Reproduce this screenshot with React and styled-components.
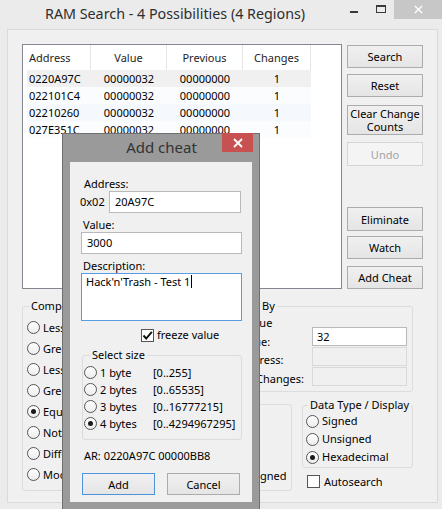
import React from 'react';
import styled, { createGlobalStyle } from 'styled-components';

const GlobalStyle = createGlobalStyle`
  *, *::before, *::after { box-sizing: border-box; }
  html, body { margin: 0; padding: 0; }
  body {
    width: 442px;
    height: 509px;
    overflow: hidden;
    background: #ebebeb;
    font-family: "Noto Sans", "Liberation Sans", sans-serif;
    font-size: 11px;
    line-height: 14px;
    color: #000;
  }
`;

const Window = styled.div`
  position: relative;
  width: 442px;
  height: 509px;
  display: flex;
  flex-direction: column;
  background: #ebebeb;
  overflow: hidden;
`;

const TitleBar = styled.div`
  height: 29px;
  flex: none;
  display: flex;
  align-items: flex-start;
`;

const Title = styled.div`
  flex: 1;
  padding-left: 45px;
  line-height: 27px;
  font-size: 14.3px;
  color: #2e2e2e;
  white-space: nowrap;
`;

const CaptionButton = styled.div`
  width: ${p => p.$w}px;
  height: 19px;
  display: flex;
  align-items: center;
  justify-content: center;
  background: ${p => p.$bg || 'transparent'};
`;

const MinGlyph = styled.span`
  width: 8px;
  height: 2px;
  margin-top: 5px;
  background: #3a3a3a;
`;

const MaxGlyph = styled.span`
  width: 10px;
  height: 8px;
  margin-top: -1px;
  border: 1px solid #3a3a3a;
  border-top-width: 2px;
`;

const Client = styled.div`
  flex: 1;
  margin: 0 4px 6px 7px;
  padding: 14px 13px 0 14px;
  background: #f0f0f0;
  border: 1px solid #dadada;
  display: flex;
  flex-direction: column;
`;

const TopRow = styled.div`
  display: flex;
  gap: 5px;
`;

const ResultList = styled.div`
  width: 320px;
  height: 245px;
  background: #fff;
  border: 1px solid #828790;
  overflow: hidden;
`;

const ListHeader = styled.div`
  display: grid;
  grid-template-columns: 68px 76px 76px 68px;
  width: 288px;
  height: 25px;
`;

const HeaderCell = styled.div`
  display: flex;
  align-items: center;
  justify-content: ${p => (p.$left ? 'flex-start' : 'center')};
  padding-left: ${p => (p.$left ? 6 : 0)}px;
  border-right: 1px solid #e5e5e5;
  color: #1e1e1e;
`;

const ListRow = styled.div`
  display: grid;
  grid-template-columns: 64px 76px 76px 68px;
  width: 284px;
  height: 17px;
  margin-left: 4px;
  align-items: center;
  background: ${p => p.$bg};
`;

const Cell = styled.div`
  text-align: ${p => (p.$left ? 'left' : 'center')};
  padding-left: ${p => (p.$left ? 2 : 0)}px;
  white-space: nowrap;
`;

const ButtonColumn = styled.div`
  width: 76px;
  padding-top: 1px;
  display: flex;
  flex-direction: column;
`;

const Button = styled.button`
  font: inherit;
  line-height: 13px;
  padding: 0;
  width: ${p => p.$w || 76}px;
  height: ${p => p.$h || 23}px;
  margin-top: ${p => p.$mt || 0}px;
  border: 1px solid ${p => (p.$default ? '#4d94dd' : p.disabled ? '#d5d5d5' : '#acacac')};
  border-radius: 0;
  background: ${p => (p.disabled ? '#f4f4f4' : 'linear-gradient(#f0f0f0, #e5e5e5)')};
  color: ${p => (p.disabled ? '#a3a3a3' : '#000')};
  display: flex;
  align-items: center;
  justify-content: center;
  text-align: center;
`;

const BottomRow = styled.div`
  margin-top: 10px;
  display: grid;
  grid-template-columns: 152px 233px;
  column-gap: 6px;
  align-items: start;
`;

const Group = styled.fieldset`
  margin: 0;
  min-width: 0;
  padding: ${p => p.$pad};
  height: ${p => (p.$h ? `${p.$h}px` : 'auto')};
  border: 1px solid #dcdcdc;
  border-radius: 3px;
`;

const Legend = styled.legend`
  padding: 0 2px;
  margin-left: ${p => p.$indent || 2}px;
  line-height: 14px;
  color: #000;
  white-space: nowrap;
`;

const OptionRow = styled.div`
  display: flex;
  align-items: center;
  gap: ${p => p.$gap || 3}px;
  height: ${p => p.$h}px;
  margin-top: ${p => p.$mt || 0}px;
  white-space: nowrap;
`;

const RadioMark = styled.span`
  flex: none;
  width: 13px;
  height: 13px;
  border-radius: 50%;
  border: 1px solid #555;
  background: linear-gradient(#ffffff, #ececec);
  display: inline-flex;
  align-items: center;
  justify-content: center;

  &::after {
    content: '';
    width: 5px;
    height: 5px;
    border-radius: 50%;
    background: #1a1a1a;
    display: ${p => (p.$on ? 'block' : 'none')};
  }
`;

const CheckMark = styled.span`
  flex: none;
  width: 13px;
  height: 13px;
  border: 1px solid #555;
  background: #fff;
  display: inline-flex;
  align-items: center;
  justify-content: center;
`;

const CompareBody = styled.div`
  display: flex;
`;

const CompareLabels = styled.div`
  width: 131px;
  display: flex;
  flex-direction: column;
`;

const CompareBoxes = styled.div`
  margin-top: 13px;
  display: flex;
  flex-direction: column;
  gap: 1px;
`;

const TextBox = styled.div`
  width: ${p => p.$w}px;
  height: ${p => p.$h || 19}px;
  padding: 0 0 0 ${p => p.$pl || 4}px;
  border: 1px solid ${p => (p.$disabled ? '#d9d9d9' : '#b9b9b9')};
  background: ${p => (p.$disabled ? '#f0f0f0' : '#fff')};
  display: flex;
  align-items: center;
  white-space: nowrap;
`;

const DataRow = styled.div`
  margin-top: 5px;
  display: grid;
  grid-template-columns: 112px 111px;
  column-gap: 10px;
  align-items: start;
`;

const Stack = styled.div`
  display: flex;
  flex-direction: column;
  padding-top: ${p => p.$pt || 0}px;
`;

const AutoRow = styled.div`
  margin-top: 7px;
  padding-left: 5px;
  display: flex;
  align-items: center;
  gap: 4px;
  height: 13px;
`;

/* overlay dialog */

const Dialog = styled.div`
  position: absolute;
  left: 62px;
  top: 133px;
  width: 198px;
  height: 377px;
  padding: 0 7px 7px;
  background: #9a9a9a;
  border: 1px solid #707070;
  display: flex;
  flex-direction: column;
`;

const DialogTitleBar = styled.div`
  height: 28px;
  flex: none;
  display: flex;
  align-items: flex-start;
`;

const DialogTitle = styled.div`
  flex: 1;
  padding-left: 31px;
  text-align: center;
  font-size: 15px;
  line-height: 27px;
  color: #333;
`;

const DialogClose = styled.div`
  width: 31px;
  height: 19px;
  margin: -1px -1px 0 0;
  background: #c75050;
  display: flex;
  align-items: center;
  justify-content: center;
`;

const DialogClient = styled.div`
  flex: 1;
  padding: 0 10px 0 11px;
  background: #f0f0f0;
  display: flex;
  flex-direction: column;
`;

const FieldLabel = styled.div`
  margin-top: ${p => p.$mt}px;
  margin-left: ${p => p.$ml || 2}px;
  line-height: 14px;
`;

const AddressRow = styled.div`
  display: flex;
  align-items: center;
  margin-left: -1px;
`;

const Prefix = styled.span`
  width: 29px;
`;

const Input = styled(TextBox)`
  height: 22px;
  padding-left: 5px;
`;

const Description = styled.div`
  width: 161px;
  height: 48px;
  padding: 1px 4px;
  border: 1px solid #569de5;
  background: #fff;
`;

const Caret = styled.span`
  display: inline-block;
  width: 1px;
  height: 13px;
  margin-left: 1px;
  vertical-align: -2px;
  background: #000;
`;

const FreezeRow = styled(OptionRow)`
  margin: 7px 0 0 60px;
`;

const SizeGroup = styled(Group)`
  margin: 6px 0 0 1px;
  width: 160px;
`;

const SizeName = styled.span`
  width: 50px;
`;

const DialogButtons = styled.div`
  margin: 10px 0 0 1px;
  display: flex;
  gap: 12px;
`;

const CloseIcon = ({ size = 9, width = 1.5 }) => (
  <svg width={size} height={size} viewBox="0 0 10 10">
    <path d="M1 1 L9 9 M9 1 L1 9" stroke="#fff" strokeWidth={width} fill="none" />
  </svg>
);

const Tick = () => (
  <svg width="11" height="11" viewBox="0 0 11 11">
    <path d="M1.5 5.5 L4.2 8.5 L9.8 1.8" stroke="#111" strokeWidth="1.9" fill="none" />
  </svg>
);

const Radio = ({ on, children, h, gap }) => (
  <OptionRow $h={h} $gap={gap}>
    <RadioMark $on={on} />
    <span>{children}</span>
  </OptionRow>
);

const rows = [
  ['0220A97C', '00000032', '00000000', '1'],
  ['022101C4', '00000032', '00000000', '1'],
  ['02210260', '00000032', '00000000', '1'],
  ['027E351C', '00000032', '00000000', '1'],
];
const rowColors = ['#f0f0f0', '#fbfcfe', '#f5f8fd', '#fbfcfe'];

const operators = [
  'Less Than',
  'Greater Than',
  'Less Than or Equal To',
  'Greater Than or Equal To',
  'Equal To',
  'Not Equal To',
  'Different By:',
  'Modulo',
];

const sizes = [
  ['1 byte', '[0..255]'],
  ['2 bytes', '[0..65535]'],
  ['3 bytes', '[0..16777215]'],
  ['4 bytes', '[0..4294967295]'],
];

const AddCheatDialog = () => (
  <Dialog>
    <DialogTitleBar>
      <DialogTitle>Add cheat</DialogTitle>
      <DialogClose>
        <CloseIcon size={10} width={1.8} />
      </DialogClose>
    </DialogTitleBar>
    <DialogClient>
      <FieldLabel $mt={15} $ml={3}>Address:</FieldLabel>
      <AddressRow>
        <Prefix>0x02</Prefix>
        <Input $w={132}>20A97C</Input>
      </AddressRow>
      <FieldLabel $mt={5}>Value:</FieldLabel>
      <Input $w={161}>3000</Input>
      <FieldLabel $mt={5}>Description:</FieldLabel>
      <Description>
        Hack'n'Trash - Test 1<Caret />
      </Description>
      <FreezeRow $h={14}>
        <CheckMark><Tick /></CheckMark>
        <span>freeze value</span>
      </FreezeRow>
      <SizeGroup $pad="2px 4px 7px 1px">
        <Legend $indent={6}>Select size</Legend>
        {sizes.map(([label, range], i) => (
          <OptionRow key={label} $h={17}>
            <RadioMark $on={i === 3} />
            <SizeName>{label}</SizeName>
            <span>{range}</span>
          </OptionRow>
        ))}
      </SizeGroup>
      <FieldLabel $mt={9} $ml={3}>AR: 0220A97C 00000BB8</FieldLabel>
      <DialogButtons>
        <Button $w={73} $h={22} $default>Add</Button>
        <Button $w={73} $h={22}>Cancel</Button>
      </DialogButtons>
    </DialogClient>
  </Dialog>
);

const App = () => (
  <Window>
    <GlobalStyle />
    <TitleBar>
      <Title>RAM Search - 4 Possibilities (4 Regions)</Title>
      <CaptionButton $w={26}><MinGlyph /></CaptionButton>
      <CaptionButton $w={27}><MaxGlyph /></CaptionButton>
      <CaptionButton $w={48} $bg="#c7c7c7"><CloseIcon /></CaptionButton>
    </TitleBar>
    <Client>
      <TopRow>
        <ResultList>
          <ListHeader>
            <HeaderCell $left>Address</HeaderCell>
            <HeaderCell>Value</HeaderCell>
            <HeaderCell>Previous</HeaderCell>
            <HeaderCell>Changes</HeaderCell>
          </ListHeader>
          {rows.map((r, i) => (
            <ListRow key={r[0]} $bg={rowColors[i]}>
              <Cell $left>{r[0]}</Cell>
              <Cell>{r[1]}</Cell>
              <Cell>{r[2]}</Cell>
              <Cell>{r[3]}</Cell>
            </ListRow>
          ))}
        </ResultList>
        <ButtonColumn>
          <Button>Search</Button>
          <Button $mt={6}>Reset</Button>
          <Button $mt={8} $h={30}>Clear Change<br />Counts</Button>
          <Button $mt={7} $h={24} disabled>Undo</Button>
          <Button $mt={41} $h={24}>Eliminate</Button>
          <Button $mt={5}>Watch</Button>
          <Button $mt={7}>Add Cheat</Button>
        </ButtonColumn>
      </TopRow>
      <BottomRow>
        <Group $pad="4px 4px 5px 4px">
          <Legend>Comparison Operator</Legend>
          {operators.map((op, i) => (
            <Radio key={op} h={21} on={i === 4}>{op}</Radio>
          ))}
        </Group>
        <Stack>
          <Group $pad="1px 5px 3px 0">
            <Legend $indent={7}>Compare To / By</Legend>
            <CompareBody>
              <CompareLabels>
                <Radio h={18.5} on>Previous Value</Radio>
                <Radio h={18.5}>Specific Value:</Radio>
                <Radio h={18.5}>Specific Address:</Radio>
                <Radio h={18.5}>Number of Changes:</Radio>
              </CompareLabels>
              <CompareBoxes>
                <TextBox $w={95}>32</TextBox>
                <TextBox $w={95} $disabled />
                <TextBox $w={95} $disabled />
              </CompareBoxes>
            </CompareBody>
          </Group>
          <DataRow>
            <Group $pad="0 3px 3px 0" $h={94}>
              <Legend $indent={5}>Data Size</Legend>
              <Radio h={18}>1 byte</Radio>
              <Radio h={18}>2 bytes</Radio>
              <Radio h={18} on>4 bytes</Radio>
              <OptionRow $h={18} $mt={2} $gap={2}>
                <CheckMark />
                <span>Check Misaligned</span>
              </OptionRow>
            </Group>
            <Stack $pt={1}>
              <Group $pad="0 3px 1px 3px">
                <Legend>Data Type / Display</Legend>
                <Radio h={18}>Signed</Radio>
                <Radio h={18}>Unsigned</Radio>
                <Radio h={18} on>Hexadecimal</Radio>
              </Group>
              <AutoRow>
                <CheckMark />
                <span>Autosearch</span>
              </AutoRow>
            </Stack>
          </DataRow>
        </Stack>
      </BottomRow>
    </Client>
    <AddCheatDialog />
  </Window>
);

export default App;
